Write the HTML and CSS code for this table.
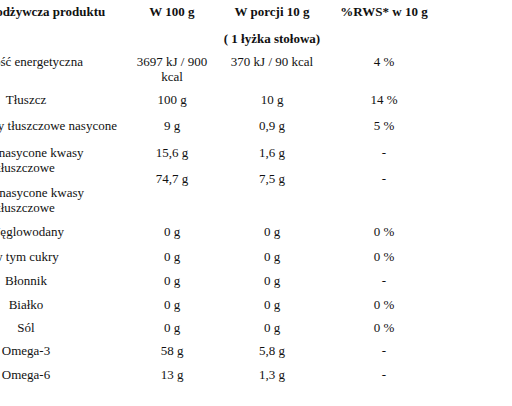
FILE: index.html
```html
<!DOCTYPE html>
<html lang="pl">
<head>
  <meta charset="UTF-8">
  <meta name="viewport" content="width=device-width, initial-scale=1.0">
  <title>Wartość odżywcza</title>
  <link rel="stylesheet" href="styles.css">
</head>
<body>
  <div class="nutrition">
    <div class="head">Wartość odżywcza produktu</div>
    <div class="head">W 100 g</div>
    <div class="head">W porcji 10 g</div>
    <div class="head">%RWS* w 10 g</div>

    <div></div>
    <div></div>
    <div class="head">( 1 łyżka stołowa)</div>
    <div></div>

    <div>Wartość energetyczna</div>
    <div>3697 kJ / 900<br>kcal</div>
    <div>370 kJ / 90 kcal</div>
    <div>4 %</div>

    <div>Tłuszcz</div>
    <div>100 g</div>
    <div>10 g</div>
    <div>14 %</div>

    <div>w tym kwasy tłuszczowe nasycone</div>
    <div>9 g</div>
    <div>0,9 g</div>
    <div>5 %</div>

    <!-- etykiety i wartości nie leżą w jednej linii -->
    <div class="tall">Jednonasycone kwasy<br>tłuszczowe</div>
    <div>15,6 g</div>
    <div>1,6 g</div>
    <div>-</div>

    <div class="tall">74,7 g</div>
    <div class="tall">7,5 g</div>
    <div class="tall">-</div>

    <div>Wielonasycone kwasy<br>tłuszczowe</div>

    <div>Węglowodany</div>
    <div>0 g</div>
    <div>0 g</div>
    <div>0 %</div>

    <div>w tym cukry</div>
    <div>0 g</div>
    <div>0 g</div>
    <div>0 %</div>

    <div>Błonnik</div>
    <div>0 g</div>
    <div>0 g</div>
    <div>-</div>

    <div>Białko</div>
    <div>0 g</div>
    <div>0 g</div>
    <div>0 %</div>

    <div>Sól</div>
    <div>0 g</div>
    <div>0 g</div>
    <div>0 %</div>

    <div>Omega-3</div>
    <div>58 g</div>
    <div>5,8 g</div>
    <div>-</div>

    <div>Omega-6</div>
    <div>13 g</div>
    <div>1,3 g</div>
    <div>-</div>
  </div>
</body>
</html>
```

FILE: styles.css
```css
* { box-sizing: border-box; }
body {
  margin: 0;
  background: #ffffff;
  color: #111111;
  font-family: "Liberation Serif", "Times New Roman", serif;
  font-size: 13px;
  line-height: 15px;
  overflow: hidden;
}
.nutrition {
  display: grid;
  grid-template-columns: 190px 102px 98px 126px;
  grid-template-rows: 27px 23px 38px 26px 27px 26px 14px 39px 25px 24px 24px 23px 23px 24px 24px;
  margin-left: -69px;
}
.nutrition > div {
  padding-top: 4px;
  text-align: center;
}
.nutrition .head { font-weight: bold; }
.nutrition .tall { grid-row: span 2; }
```
